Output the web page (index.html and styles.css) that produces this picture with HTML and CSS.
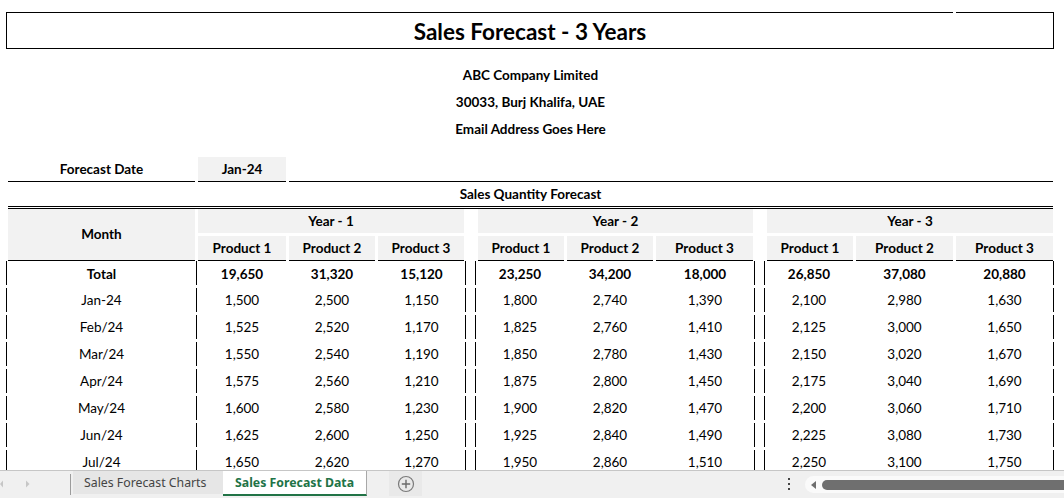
FILE: index.html
```html
<!DOCTYPE html>
<html>
<head>
<meta charset="utf-8">
<link rel="stylesheet" href="styles.css">
</head>
<body>
<div class="app">
  <div class="sheet">
    <div class="title">
      <div class="title-top"><div class="seg-main"></div><div class="seg-end"></div></div>
      <div class="title-text">Sales Forecast - 3 Years</div>
    </div>
    <div class="company">
      <div class="company-line">ABC Company Limited</div>
      <div class="company-line">30033, Burj Khalifa, UAE</div>
      <div class="company-line">Email Address Goes Here</div>
    </div>
    <div class="grid">
      <div class="fd-label">Forecast Date</div>
      <div class="fd-value">Jan-24</div>
      <div class="fd-rest"></div>

      <div class="sqf">Sales Quantity Forecast</div>

      <div class="month">Month</div>
      <div class="year y1">Year - 1</div>
      <div class="blank"></div>
      <div class="year y2">Year - 2</div>
      <div class="blank"></div>
      <div class="year y3">Year - 3</div>

      <div class="prod">Product 1</div><div class="prod">Product 2</div><div class="prod">Product 3</div>
      <div class="blank"></div>
      <div class="prod">Product 1</div><div class="prod">Product 2</div><div class="prod">Product 3</div>
      <div class="blank"></div>
      <div class="prod">Product 1</div><div class="prod">Product 2</div><div class="prod">Product 3</div>

      <div class="d ca total">Total</div><div class="d total">19,650</div><div class="d total">31,320</div><div class="d cd total">15,120</div><div class="gap"></div><div class="d cf total">23,250</div><div class="d total">34,200</div><div class="d ch total">18,000</div><div class="gap"></div><div class="d cj total">26,850</div><div class="d total">37,080</div><div class="d cl total">20,880</div>

      <div class="d ca">Jan-24</div><div class="d">1,500</div><div class="d">2,500</div><div class="d cd">1,150</div><div class="gap"></div><div class="d cf">1,800</div><div class="d">2,740</div><div class="d ch">1,390</div><div class="gap"></div><div class="d cj">2,100</div><div class="d">2,980</div><div class="d cl">1,630</div>

      <div class="d ca">Feb/24</div><div class="d">1,525</div><div class="d">2,520</div><div class="d cd">1,170</div><div class="gap"></div><div class="d cf">1,825</div><div class="d">2,760</div><div class="d ch">1,410</div><div class="gap"></div><div class="d cj">2,125</div><div class="d">3,000</div><div class="d cl">1,650</div>

      <div class="d ca">Mar/24</div><div class="d">1,550</div><div class="d">2,540</div><div class="d cd">1,190</div><div class="gap"></div><div class="d cf">1,850</div><div class="d">2,780</div><div class="d ch">1,430</div><div class="gap"></div><div class="d cj">2,150</div><div class="d">3,020</div><div class="d cl">1,670</div>

      <div class="d ca">Apr/24</div><div class="d">1,575</div><div class="d">2,560</div><div class="d cd">1,210</div><div class="gap"></div><div class="d cf">1,875</div><div class="d">2,800</div><div class="d ch">1,450</div><div class="gap"></div><div class="d cj">2,175</div><div class="d">3,040</div><div class="d cl">1,690</div>

      <div class="d ca">May/24</div><div class="d">1,600</div><div class="d">2,580</div><div class="d cd">1,230</div><div class="gap"></div><div class="d cf">1,900</div><div class="d">2,820</div><div class="d ch">1,470</div><div class="gap"></div><div class="d cj">2,200</div><div class="d">3,060</div><div class="d cl">1,710</div>

      <div class="d ca">Jun/24</div><div class="d">1,625</div><div class="d">2,600</div><div class="d cd">1,250</div><div class="gap"></div><div class="d cf">1,925</div><div class="d">2,840</div><div class="d ch">1,490</div><div class="gap"></div><div class="d cj">2,225</div><div class="d">3,080</div><div class="d cl">1,730</div>

      <div class="d ca">Jul/24</div><div class="d">1,650</div><div class="d">2,620</div><div class="d cd">1,270</div><div class="gap"></div><div class="d cf">1,950</div><div class="d">2,860</div><div class="d ch">1,510</div><div class="gap"></div><div class="d cj">2,250</div><div class="d">3,100</div><div class="d cl">1,750</div>
    </div>
  </div>

  <div class="tabbar">
    <div class="nav">
      <svg class="nav-ico" width="71" height="27" viewBox="0 0 71 27">
        <path d="M3 9.5 L0 13 L3 16.5 Z" fill="#c6c6c6"/>
        <path d="M26 9.5 L29.5 13 L26 16.5 Z" fill="#c6c6c6"/>
      </svg>
    </div>
    <div class="sep"></div>
    <div class="tab">Sales Forecast Charts</div>
    <div class="tab active">Sales Forecast Data</div>
    <div class="add">
      <svg width="18" height="18" viewBox="0 0 18 18">
        <circle cx="9" cy="9" r="7.5" fill="none" stroke="#7a7a7a" stroke-width="1.2"/>
        <path d="M9 4.8 V13.2 M4.8 9 H13.2" stroke="#6a6a6a" stroke-width="1.4"/>
      </svg>
    </div>
    <div class="fill"></div>
    <div class="dots"><span></span><span></span><span></span></div>
    <div class="scroll">
      <svg class="scroll-arrow" width="8" height="10" viewBox="0 0 8 10"><path d="M6 1 L1 5 L6 9 Z" fill="#6e6e6e"/></svg>
      <div class="thumb"></div>
    </div>
  </div>
</div>
</body>
</html>
```
FILE: styles.css
```css
html, body {
  margin: 0;
  padding: 0;
  background: #fff;
}
body {
  font-family: Lato, "Liberation Sans", Arial, sans-serif;
  color: #000;
  font-size: 14px;
}
.app {
  width: 1064px;
  height: 498px;
  display: flex;
  flex-direction: column;
  overflow: hidden;
}
.sheet {
  flex: 1;
  min-height: 0;
  overflow: hidden;
  padding-top: 12px;
}

/* title box */
.title {
  margin-left: 6px;
  width: 1048px;
  box-sizing: border-box;
  border: 1px solid #000;
  border-top: 0;
}
.title-top {
  display: flex;
  height: 1px;
  margin: 0 -1px;
}
.seg-main { flex: 1; background: #000; }
.seg-end { width: 98px; margin-left: 3px; background: #000; }
.title-text {
  height: 35px;
  line-height: 37px;
  text-align: center;
  font-weight: 700;
  font-size: 22.5px;
}

/* company block */
.company {
  margin-top: 13px;
  margin-left: 8px;
  width: 1045px;
}
.company-line {
  height: 27px;
  line-height: 27px;
  text-align: center;
  font-weight: 700;
  font-size: 13.5px;
}

/* main grid */
.grid {
  margin-top: 14px;
  margin-left: 8px;
  width: 1045px;
  display: grid;
  grid-template-columns: 187px 88px 86px 86px 8px 86px 86px 97px 8px 86px 97px 97px;
  column-gap: 3px;
  font-size: 13.5px;
}
.fd-label, .fd-value, .fd-rest {
  height: 25px;
  box-sizing: border-box;
  border-bottom: 1px solid #000;
  line-height: 25px;
  text-align: center;
  font-weight: 700;
}
.fd-value { background: #f2f2f2; }
.fd-rest { grid-column: 3 / -1; }

.sqf {
  grid-column: 1 / -1;
  height: 27px;
  box-sizing: border-box;
  border-bottom: 3px double #000;
  line-height: 24px;
  text-align: center;
  font-weight: 700;
}

.month {
  grid-row: span 2;
  background: #f2f2f2;
  box-sizing: border-box;
  border-bottom: 1px solid #000;
  font-weight: 700;
  display: flex;
  align-items: center;
  justify-content: center;
  padding-bottom: 1px;
}
.year {
  grid-column: span 3;
  height: 24px;
  margin-bottom: 3px;
  background: #f2f2f2;
  line-height: 24px;
  text-align: center;
  font-weight: 700;
}
.prod {
  height: 25px;
  box-sizing: border-box;
  background: #f2f2f2;
  border-bottom: 1px solid #000;
  line-height: 25px;
  text-align: center;
  font-weight: 700;
}
.blank, .gap { min-height: 1px; }

.d {
  height: 24px;
  margin-bottom: 3px;
  box-sizing: border-box;
  line-height: 25px;
  text-align: center;
  white-space: nowrap;
}
.total { font-weight: 700; line-height: 27px; }
.ca {
  margin-left: -2px;
  margin-right: -2px;
  border-left: 1px solid #000;
  border-right: 1px solid #000;
}
.cd, .ch {
  margin-right: -2px;
  border-right: 1px solid #000;
}
.cf, .cj {
  margin-left: -3px;
  border-left: 1px solid #000;
}
.cl {
  margin-right: -1px;
  border-right: 1px solid #000;
}

/* sheet tab bar */
.tabbar {
  flex: 0 0 28px;
  box-sizing: border-box;
  border-top: 1px solid #c6c6c6;
  background: #f0f0f0;
  display: flex;
  align-items: flex-start;
  font-family: "Noto Sans", "Open Sans", sans-serif;
  font-size: 12.3px;
}
.nav {
  width: 70px;
  height: 27px;
}
.nav-ico { display: block; }
.sep {
  width: 1px;
  height: 21px;
  margin-top: 3px;
  background: #9c9c9c;
}
.tab {
  height: 23px;
  line-height: 23px;
  box-sizing: border-box;
  margin-left: 2px;
  width: 150px;
  padding-left: 11px;
  background: #e6e6e6;
  color: #444;
  white-space: nowrap;
}
.tab.active {
  margin-left: 0;
  width: 144px;
  height: 25px;
  padding-left: 12px;
  background: #fff;
  color: #217346;
  font-weight: 700;
  border-right: 1px solid #a8a8a8;
  border-bottom: 2px solid #217346;
}
.add {
  margin-left: 22px;
  width: 33px;
  height: 25px;
  background: #e9e9e9;
  display: flex;
  align-items: center;
  justify-content: center;
}
.add svg { display: block; }
.fill { flex: 1; }
.dots {
  width: 4px;
  margin-right: 14px;
  padding-top: 7px;
  display: flex;
  flex-direction: column;
  align-items: center;
  gap: 3px;
}
.dots span {
  width: 2px;
  height: 2px;
  background: #444;
}
.scroll {
  width: 259px;
  height: 17px;
  margin-top: 5px;
  background: #fafafa;
  border-radius: 9px 0 0 9px;
  display: flex;
  align-items: center;
}
.scroll-arrow {
  display: block;
  margin-left: 5px;
}
.thumb {
  flex: 1;
  height: 10px;
  margin-left: 4px;
  margin-right: -6px;
  background: #6f6f6f;
  border-radius: 5px;
}
```
